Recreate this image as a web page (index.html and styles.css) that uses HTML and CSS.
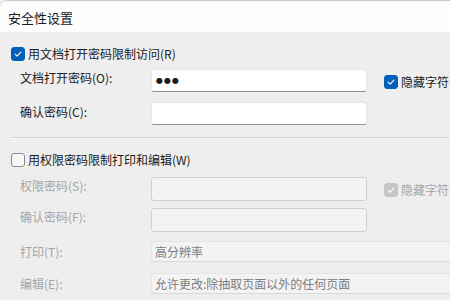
FILE: index.html
```html
<!DOCTYPE html>
<html lang="zh-CN">
<head>
    <meta charset="UTF-8">
    <meta name="viewport" content="width=device-width, initial-scale=1.0">
    <title>安全性设置</title>
    <link rel="stylesheet" href="styles.css">
</head>
<body>
    <div class="window">
        <div class="titlebar">安全性设置</div>
        <div class="content">
            <div class="check-row">
                <span class="box checked"><svg viewBox="0 0 14 14"><polyline points="3.6,7.2 6,9.5 10.4,4.7"/></svg></span>
                <span>用文档打开密码限制访问(R)</span>
            </div>
            <div class="field-row first">
                <span class="label">文档打开密码(O):</span>
                <div class="field">●●●</div>
                <div class="check-row side">
                    <span class="box checked"><svg viewBox="0 0 14 14"><polyline points="3.6,7.2 6,9.5 10.4,4.7"/></svg></span>
                    <span>隐藏字符(H)</span>
                </div>
            </div>
            <div class="field-row second">
                <span class="label lower">确认密码(C):</span>
                <div class="field"></div>
            </div>

            <div class="separator"></div>

            <div class="check-row section">
                <span class="box"></span>
                <span>用权限密码限制打印和编辑(W)</span>
            </div>
            <div class="field-row disabled first-d">
                <span class="label">权限密码(S):</span>
                <div class="field off"></div>
                <div class="check-row side">
                    <span class="box checked off"><svg viewBox="0 0 14 14"><polyline points="3.6,7.2 6,9.5 10.4,4.7"/></svg></span>
                    <span>隐藏字符(H)</span>
                </div>
            </div>
            <div class="field-row disabled second-d">
                <span class="label">确认密码(F):</span>
                <div class="field off"></div>
            </div>
            <div class="field-row disabled print">
                <span class="label">打印(T):</span>
                <div class="combo">高分辨率</div>
            </div>
            <div class="field-row disabled edit">
                <span class="label">编辑(E):</span>
                <div class="combo">允许更改:除抽取页面以外的任何页面</div>
            </div>
        </div>
    </div>
</body>
</html>
```

FILE: styles.css
```css
html, body {
    margin: 0;
    width: 450px;
    height: 300px;
    overflow: hidden;
}
body {
    background: #eeeeee;
    font-family: "Noto Sans CJK SC", sans-serif;
    font-size: 12px;
    color: #1b1b1b;
}
.window {
    width: 640px;
    border-top: 1px solid #c9c9c9;
    border-top-left-radius: 8px;
    overflow: hidden;
}
.titlebar {
    background: #fdfdfd;
    height: 31px;
    line-height: 33px;
    padding-left: 8px;
    font-size: 13px;
}
.content {
    padding: 14px 0 0 11px;
}
.check-row {
    display: flex;
    align-items: center;
    gap: 3px;
    height: 16px;
    line-height: 16px;
}
.box {
    width: 14px;
    height: 14px;
    box-sizing: border-box;
    border-radius: 3px;
    border: 1px solid #8b8b8b;
    background: #f7f7f7;
    flex: none;
}
.box svg {
    display: block;
    width: 12px;
    height: 12px;
}
.box polyline {
    fill: none;
    stroke: #fff;
    stroke-width: 1.3;
    stroke-linecap: round;
    stroke-linejoin: round;
}
.box.checked {
    background: #005fb8;
    border-color: #005fb8;
}
.box.checked.off {
    background: #c6c6c6;
    border-color: #c6c6c6;
}
.field-row {
    display: flex;
    align-items: flex-start;
    padding-left: 9px;
}
.label {
    width: 131px;
    line-height: 17px;
    flex: none;
}
.label.lower {
    padding-top: 1px;
}
.field {
    width: 216px;
    height: 23px;
    box-sizing: border-box;
    background: #fff;
    border: 1px solid #e6e6e6;
    border-bottom-color: #8e8e8e;
    border-radius: 3px;
    flex: none;
    padding-left: 4px;
    font-family: "DejaVu Sans", sans-serif;
    font-size: 8px;
    letter-spacing: 1px;
    line-height: 21px;
}
.field.off {
    height: 24px;
    background: #f3f3f3;
    border-color: #cfcfcf;
}
.side {
    margin-left: 17px;
    margin-top: 5px;
}
.first { margin-top: 7px; }
.second { margin-top: 10px; }
.separator {
    margin-top: 12px;
    border-top: 1px solid #d3d3d3;
    border-bottom: 1px solid #f9f9f9;
}
.section { margin-top: 13px; }
.first-d { margin-top: 9px; }
.second-d { margin-top: 7px; }
.print { margin-top: 9px; }
.edit { margin-top: 11px; }
.disabled .label {
    color: #a5a5a5;
}
.disabled .side {
    color: #a5a5a5;
}
.combo {
    width: 420px;
    height: 21px;
    box-sizing: border-box;
    background: #f3f3f3;
    border: 1px solid #e5e5e5;
    border-bottom-color: #d9d9d9;
    border-radius: 3px;
    padding-left: 3px;
    line-height: 19px;
    color: #7d7d7d;
    flex: none;
}
.print .label, .edit .label {
    padding-top: 2px;
}
```
